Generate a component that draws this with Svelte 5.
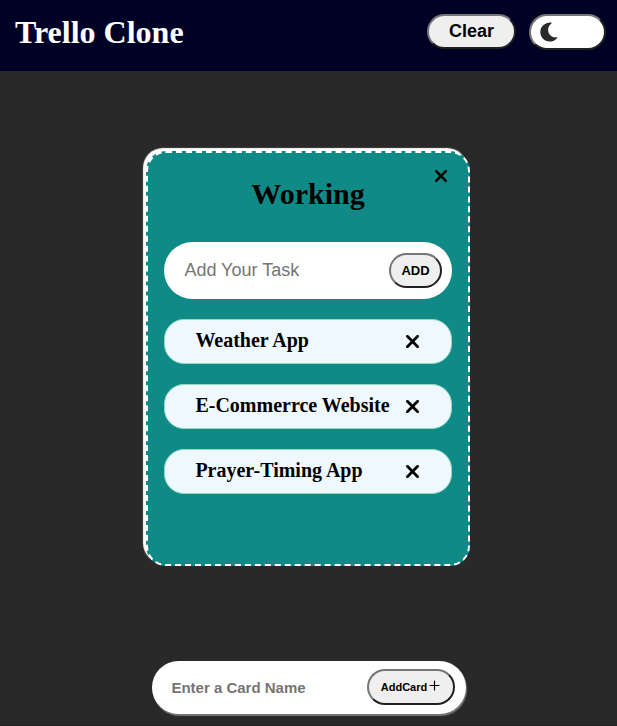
<script>
  let dark = $state(true);
  let tasks = $state(['Weather App', 'E-Commerrce Website', 'Prayer-Timing App']);
  const remove = (i) => tasks.splice(i, 1);
</script>

{#snippet cross(size)}
  <svg width={size} height={size} viewBox="0 0 14 14" aria-hidden="true">
    <path d="M2.2 2.2 11.8 11.8M11.8 2.2 2.2 11.8" fill="none" stroke="#000" stroke-width="2.6" stroke-linecap="round" />
  </svg>
{/snippet}

<div class="page">
  <header>
    <h1>Trello Clone</h1>
    <div class="actions">
      <button class="pill clear" onclick={() => (tasks = [])}>Clear</button>
      <button class="pill toggle" aria-label="Toggle theme" onclick={() => (dark = !dark)}>
        <svg width="20" height="20" viewBox="0 0 20 20" aria-hidden="true">
          <path d="M11.2.5C5 .2.3 4.6.3 10.1.3 15.600 4.700 19.600 9.500 19.600 12.700 19.600 15.500 18.200 17.100 16.200 17.500 15.700 17.200 15.200 16.500 15.300 8.900 16.400 4.900 6.700 11.400 1.600 11.900 1.100 11.800.600 11.200.500Z" fill="#292929" />
        </svg>
      </button>
    </div>
  </header>

  <main>
    <section class="card">
      <div class="title">
        <h2>Working</h2>
        <button class="bare close" aria-label="Delete card">{@render cross(14)}</button>
      </div>
      <form class="add-task" onsubmit={(e) => e.preventDefault()}>
        <input placeholder="Add Your Task" />
        <button class="pill add">ADD</button>
      </form>
      <ul>
        {#each tasks as task, i}
          <li>
            <span>{task}</span>
            <button class="bare" aria-label="Delete task" onclick={() => remove(i)}>{@render cross(15)}</button>
          </li>
        {/each}
      </ul>
    </section>
  </main>

  <form class="add-card" onsubmit={(e) => e.preventDefault()}>
    <input placeholder="Enter a Card Name" />
    <button class="pill new">
      AddCard
      <svg width="11" height="11" viewBox="0 0 11 11" aria-hidden="true">
        <path d="M5.500 1V10M1 5.500H10" fill="none" stroke="#000" stroke-width="1.200" stroke-linecap="round" />
      </svg>
    </button>
  </form>
</div>

<style>
  :global(body) { margin: 0; background: #292929; }
  .page {
    height: 726px;
    overflow: hidden;
    display: flex;
    flex-direction: column;
    background: #292929;
    border-bottom: 1px solid #231e23;
    font-family: "Liberation Serif", serif;
    box-sizing: border-box;
  }
  .page * { box-sizing: border-box; }
  header {
    height: 71px;
    flex: none;
    padding: 14px 11px 0 15px;
    display: flex;
    justify-content: space-between;
    align-items: flex-start;
    background: #000225;
  }
  h1 { margin: 0; font-size: 32px; line-height: 37px; color: #fff; }
  .actions { display: flex; gap: 13px; }
  button, input { font-family: "Liberation Sans", Arial, sans-serif; margin: 0; }
  .pill {
    padding: 0;
    border: 2px solid;
    border-color: #767676 #212121 #212121 #767676;
    border-radius: 20px;
    background: #efefef;
    color: #000;
    font-weight: bold;
    display: flex;
    align-items: center;
    justify-content: center;
  }
  .clear { width: 89px; height: 35px; font-size: 18px; }
  .toggle { width: 77px; height: 36px; background: #fff; justify-content: flex-start; padding: 0 0 1px 9px; }
  main { flex: none; padding: 80px 0 0 146px; }
  .card {
    width: 324px;
    height: 415px;
    padding: 0 16px;
    border: 2px dashed #fff;
    border-radius: 20px;
    background: #108a86;
    box-shadow: -3px -3px 1px #fff;
  }
  .title { position: relative; height: 89px; padding-top: 23px; }
  h2 { margin: 0; text-align: center; font-size: 30px; line-height: 35px; }
  .bare { padding: 0; border: 0; background: none; display: flex; }
  .close { position: absolute; right: 4.5px; top: 16px; }
  form { display: flex; align-items: center; background: #fff; }
  input { flex: 1; min-width: 0; border: 0; outline: 0; padding: 0; background: none; }
  input::placeholder { color: #757575; opacity: 1; }
  .add-task { height: 57px; border-radius: 30px; padding: 0 10px 0 20.400px; }
  .add-task input { font-size: 18px; }
  .add { width: 53px; height: 35px; font-size: 13px; }
  ul { list-style: none; margin: 20px 0 0; padding: 0; display: flex; flex-direction: column; gap: 20px; }
  li {
    height: 45px;
    display: flex;
    align-items: center;
    justify-content: space-between;
    padding: 0 31px 0 30.400px;
    border: 1px solid #8fdcc0;
    border-radius: 20px;
    background: #f0f8ff;
    font-size: 20px;
    font-weight: bold;
  }
  li span { padding-bottom: 2px; }
  .add-card {
    flex: none;
    width: 314px;
    height: 53px;
    margin: 95px 0 0 152px;
    padding: 0 11px 1px 19.400px;
    border-radius: 30px;
    box-shadow: 1px 2px 1px #767676;
  }
  .add-card input { font-size: 15px; font-weight: bold; padding-top: 1px; }
  .new { width: 88px; height: 36px; font-size: 11px; gap: 2px; padding-right: 1px; }
  .new svg { margin-bottom: 3px; }
</style>
